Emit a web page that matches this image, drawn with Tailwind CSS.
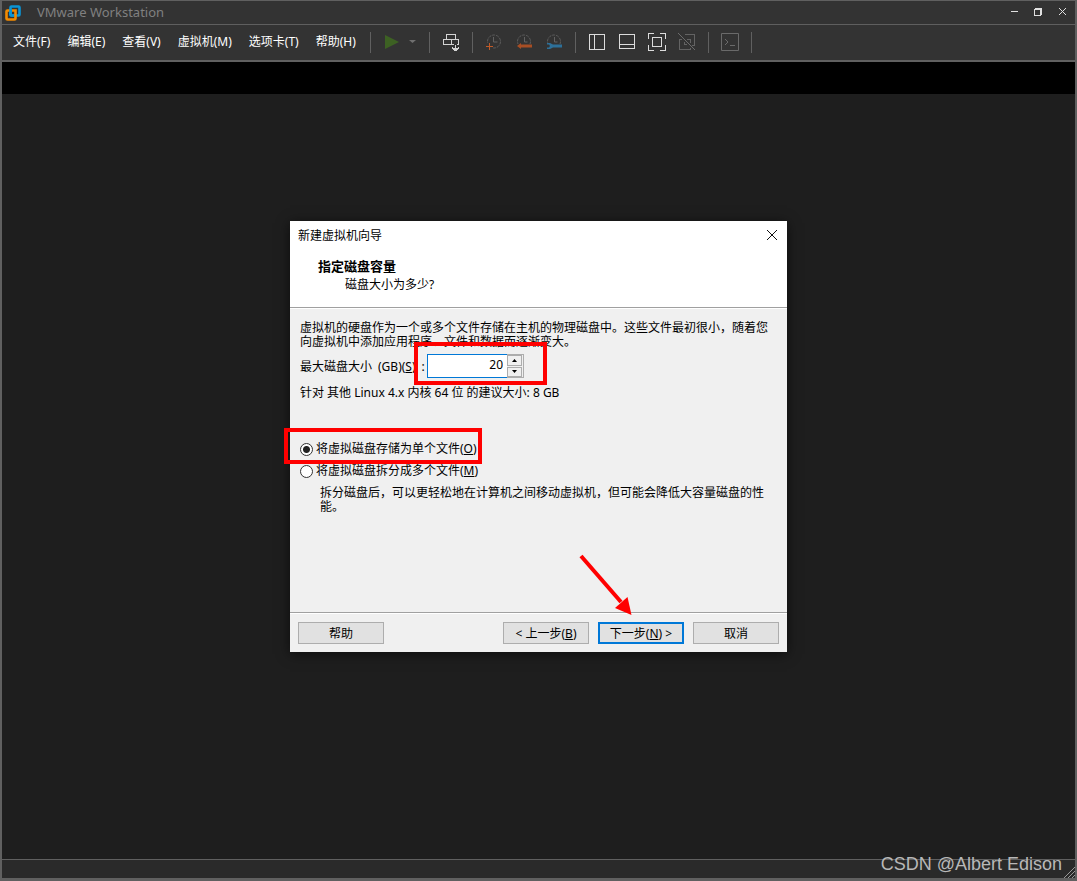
<!DOCTYPE html>
<html lang="zh-CN">
<head>
<meta charset="utf-8">
<meta name="viewport" content="width=device-width, initial-scale=1">
<title>VMware Workstation</title>
<script src="https://cdn.jsdelivr.net/npm/@tailwindcss/browser@4"></script>
</head>
<body class="relative flex min-h-screen flex-col border-x-2 border-t border-b-3 border-[#606060] bg-[#1e1e1e] font-['Noto_Sans','Noto_Sans_CJK_SC',sans-serif] text-xs">

<header class="flex h-6 items-center border-b border-[#5f5f5f] bg-[#333333] pl-[3px]">
  <svg class="size-4" viewBox="0 0 16 16" fill="none" stroke-width="2.6" aria-hidden="true">
    <rect x="5.500" y="1.500" width="9" height="9" rx="1" stroke="#0a95d6"/>
    <path d="M5 5.500H2.500a1 1 0 0 0-1 1V13.500a1 1 0 0 0 1 1H9.500a1 1 0 0 0 1-1V5.500H7" stroke="#f38b00"/>
    <path d="M5.500 4V9.500a1 1 0 0 0 1 1H9" stroke="#0a95d6"/>
  </svg>
  <h1 class="ml-4 text-[13px] text-[#808080]">VMware Workstation</h1>
  <div class="ml-auto flex">
    <button type="button" class="h-6 w-6" aria-label="最小化"><svg class="size-6" viewBox="0 0 24 24" fill="none" stroke="#e0e0e0" shape-rendering="crispEdges"><path d="M8 10.500h7"/></svg></button>
    <button type="button" class="h-6 w-6" aria-label="还原"><svg class="size-6" viewBox="0 0 24 24" fill="none" stroke="#e0e0e0" shape-rendering="crispEdges"><path d="M7.500 8.500h6v6h-6zM8 7.500h7M14.500 7v7"/></svg></button>
    <button type="button" class="h-6 w-6" aria-label="关闭"><svg class="size-6" viewBox="0 0 24 24" fill="none" stroke="#e0e0e0"><path d="M8 7l7 7M15 7l-7 7"/></svg></button>
  </div>
</header>

<div class="flex h-[37px] items-center border-b-2 border-[#606060] bg-[#333333] pb-px pl-[11px]">
  <nav class="flex gap-[17px] pb-px text-white" aria-label="菜单">
    <button type="button">文件(F)</button>
    <button type="button">编辑(E)</button>
    <button type="button">查看(V)</button>
    <button type="button">虚拟机(M)</button>
    <button type="button">选项卡(T)</button>
    <button type="button">帮助(H)</button>
  </nav>
  <div class="ml-[14px] flex items-center" role="toolbar" aria-label="工具栏">
    <span class="mr-[6px] h-[21px] w-px bg-[#606060]"></span>
    <button type="button" aria-label="开机"><svg class="h-6 w-[30px]" viewBox="0 0 30 24"><path d="M8 5v14l14-7z" fill="#3d6123"/></svg></button>
    <button type="button" aria-label="电源选项"><svg class="h-6 w-4" viewBox="0 0 16 24"><path d="M2 10h7l-3.500 3z" fill="#707070"/></svg></button>
    <span class="mx-[6px] h-[21px] w-px bg-[#606060]"></span>
    <button type="button" aria-label="发送 Ctrl+Alt+Del"><svg class="h-6 w-[30px]" viewBox="0 0 30 24" fill="none" stroke="#d4d4d4" shape-rendering="crispEdges"><path d="M10.500 9.500v-5h9v5M7.500 9.500h15v5h-15zM15.500 9.500v5"/><path d="M19.500 13v7" stroke="#333" stroke-width="3"/><path d="M19.500 15v6M16.500 17v2M17.500 18v2M18.500 18v3M20.500 18v3M21.500 18v2M22.500 17v2"/></svg></button>
    <span class="mx-[6px] h-[21px] w-px bg-[#606060]"></span>
    <button type="button" aria-label="拍摄快照"><svg class="h-6 w-[30px]" viewBox="0 0 30 24" fill="none"><circle cx="15" cy="11.500" r="6.500" stroke="#5c5c5c" stroke-dasharray="3 1"/><path d="M14.500 7v5h4" stroke="#626262"/><path d="M7 13h7v7H7z" fill="#333"/><path d="M10 13h1v3h3v1h-3v3h-1v-3H7v-1h3z" fill="#c05a28" shape-rendering="crispEdges"/></svg></button>
    <button type="button" aria-label="恢复快照"><svg class="h-6 w-[30px]" viewBox="0 0 30 24" fill="none"><circle cx="15" cy="11.500" r="6.500" stroke="#5c5c5c" stroke-dasharray="3 1"/><path d="M15.500 7v5h3" stroke="#626262"/><path d="M8 14h15v6H8z" fill="#333"/><path d="M8 16l4-3v1.500h11v3H12V19z" fill="#a84e24"/></svg></button>
    <button type="button" aria-label="管理快照"><svg class="h-6 w-[30px]" viewBox="0 0 30 24" fill="none"><circle cx="15" cy="11.500" r="6.500" stroke="#5c5c5c" stroke-dasharray="3 1"/><path d="M15.500 7v5h3" stroke="#626262"/><path d="M8 14h15v6H8z" fill="#333"/><path d="M8 13h3l3 1.500h9v3h-9L11 19H8v-1.500h2l1-1.500-1-1.500H8z" fill="#2d7099"/></svg></button>
    <span class="mx-[6px] h-[21px] w-px bg-[#606060]"></span>
    <button type="button" aria-label="显示库"><svg class="h-6 w-[30px]" viewBox="0 0 30 24" fill="none" stroke="#dcdcdc" shape-rendering="crispEdges"><path d="M7.500 4.500h15v15h-15zM12.500 4.500v15"/></svg></button>
    <button type="button" aria-label="显示缩略图"><svg class="h-6 w-[30px]" viewBox="0 0 30 24" fill="none" stroke="#dcdcdc" shape-rendering="crispEdges"><path d="M7.500 4.500h15v14h-15zM7.500 14.500h15"/></svg></button>
    <button type="button" aria-label="全屏"><svg class="h-6 w-[30px]" viewBox="0 0 30 24" fill="none" stroke="#dcdcdc" shape-rendering="crispEdges"><path d="M6.500 9V3.500H12M18 3.500h5.500V9M23.500 15v5.500H18M12 20.500H6.500V15M10.500 7.500h9v9h-9z"/></svg></button>
    <button type="button" aria-label="Unity 模式"><svg class="h-6 w-[30px]" viewBox="0 0 30 24" fill="none" stroke="#636363" shape-rendering="crispEdges"><path d="M13 4.500h9.500v11H20M15 9.500h3.500v3M10 9.500H7.500v10h11V18M12.500 12v2.500H15"/><path d="M6 3l17 17" stroke="#6c6c6c"/></svg></button>
    <span class="mx-[6px] h-[21px] w-px bg-[#606060]"></span>
    <button type="button" aria-label="控制台"><svg class="h-6 w-[30px]" viewBox="0 0 30 24" fill="none" stroke="#6a6a6a"><path d="M6.500 3.500h17v17h-17zM10 9l3 3-3 3M15 15.500h5"/></svg></button>
    <span class="mx-[6px] h-[21px] w-px bg-[#606060]"></span>
  </div>
</div>
<div class="h-8 bg-black"></div>

<main class="flex grow justify-center pt-[127px]">
  <section role="dialog" aria-labelledby="wizard-title" class="relative flex w-[497px] flex-col self-start bg-[#f0f0f0] leading-[14px] text-black shadow-[0_2px_12px_rgba(0,0,0,0.6)]">
    <div class="border-b border-[#a0a0a0] bg-white pb-[15px]">
      <div class="flex h-7 items-center pl-2">
        <h2 id="wizard-title" class="pt-[2px]">新建虚拟机向导</h2>
        <button type="button" class="ml-auto mr-[3px]" aria-label="关闭"><svg class="size-6" viewBox="0 0 24 24" fill="none" stroke="#111"><path d="M7 7l10 10M17 7l-10 10"/></svg></button>
      </div>
      <h3 class="mt-[9px] pl-7 text-[13px] leading-[16px] font-bold">指定磁盘容量</h3>
      <p class="mt-1 pl-[55px]">磁盘大小为多少?</p>
    </div>
    <div class="min-h-[304px] border-t border-white pt-3 pr-[18px] pl-[10px]">
      <p>虚拟机的硬盘作为一个或多个文件存储在主机的物理磁盘中。这些文件最初很小，随着您向虚拟机中添加应用程序、文件和数据而逐渐变大。</p>
      <div class="mt-[5px] flex h-6 items-center">
        <label for="disk-size" class="flex w-[127px] gap-[6px] pt-px whitespace-nowrap"><span>最大磁盘大小</span><span>(GB)(<u>S</u>)</span><span>:</span></label>
        <input id="disk-size" type="text" inputmode="numeric" value="20" class="h-6 w-20 border-y border-l border-[#0078d7] bg-white pr-1 pb-[3px] text-right outline-none">
        <div class="flex h-6 w-[17px] flex-col gap-px border-y border-r border-[#adadad] pr-px">
          <button type="button" aria-label="增加" class="flex grow items-center justify-center border border-[#adadad]"><svg class="h-[3px] w-[5px]" viewBox="0 0 5 3"><path d="M0 3h5L2.500 0z"/></svg></button>
          <button type="button" aria-label="减少" class="flex grow items-center justify-center border border-[#adadad]"><svg class="h-[3px] w-[5px]" viewBox="0 0 5 3"><path d="M0 0h5L2.500 3z"/></svg></button>
        </div>
      </div>
      <p class="mt-2">针对 其他 Linux 4.x 内核 64 位 的建议大小: 8 GB</p>
      <div class="mt-[42px] flex items-center gap-[3px]">
        <input id="single" type="radio" name="store" checked class="size-[13px] appearance-none rounded-full border border-[#333] bg-white bg-[radial-gradient(circle,#222_0_3px,transparent_4px)]">
        <label for="single">将虚拟磁盘存储为单个文件(<u>O</u>)</label>
      </div>
      <div class="mt-2 flex items-center gap-[3px]">
        <input id="multi" type="radio" name="store" class="size-[13px] appearance-none rounded-full border border-[#333] bg-white">
        <label for="multi">将虚拟磁盘拆分成多个文件(<u>M</u>)</label>
      </div>
      <p class="mt-2 pl-5">拆分磁盘后，可以更轻松地在计算机之间移动虚拟机，但可能会降低大容量磁盘的性能。</p>
    </div>
    <div class="border-t border-[#a0a0a0]">
      <div class="flex border-t border-white p-2">
        <button type="button" class="h-[22px] w-[86px] border border-[#adadad] bg-[#e1e1e1] pt-[2px]">帮助</button>
        <div class="ml-auto flex gap-[9px]">
          <button type="button" class="h-[22px] w-[86px] border border-[#adadad] bg-[#e1e1e1] pt-[2px]">&lt; 上一步(<u>B</u>)</button>
          <button type="button" class="h-[22px] w-[86px] border-2 border-[#0078d7] bg-[#e1e1e1] pt-[2px]">下一步(<u>N</u>) &gt;</button>
          <button type="button" class="h-[22px] w-[86px] border border-[#adadad] bg-[#e1e1e1] pt-[2px]">取消</button>
        </div>
      </div>
    </div>

    <!-- Highlight marks -->
    <div class="pointer-events-none absolute top-[121px] left-[124px] h-[43px] w-[133px] border-4 border-[#ff0000]"></div>
    <div class="pointer-events-none absolute top-[207px] left-[-6px] h-[36px] w-[198px] border-4 border-[#ff0000]"></div>
    <svg class="pointer-events-none absolute top-[333px] left-[289px] h-[62px] w-[54px]" viewBox="0 0 54 62" aria-hidden="true"><path d="M2 2l40 46" stroke="#f00" stroke-width="4"/><path d="M52.500 61L36 54l12.500-11z" fill="#f00"/></svg>
  </section>
</main>

<footer class="flex h-[19px] items-end justify-end border-t border-[#606060] bg-[#2a2a2a]">
  <svg class="size-3" viewBox="0 0 12 12" stroke="#999" aria-hidden="true"><path d="M1 12L12 1M5 12l7-7M9 12l3-3"/></svg>
</footer>
<div class="pointer-events-none absolute right-[13px] bottom-[2px] font-['Liberation_Sans',sans-serif] text-lg leading-6 text-[#b8b8b8]">CSDN @Albert Edison</div>
</body>
</html>
